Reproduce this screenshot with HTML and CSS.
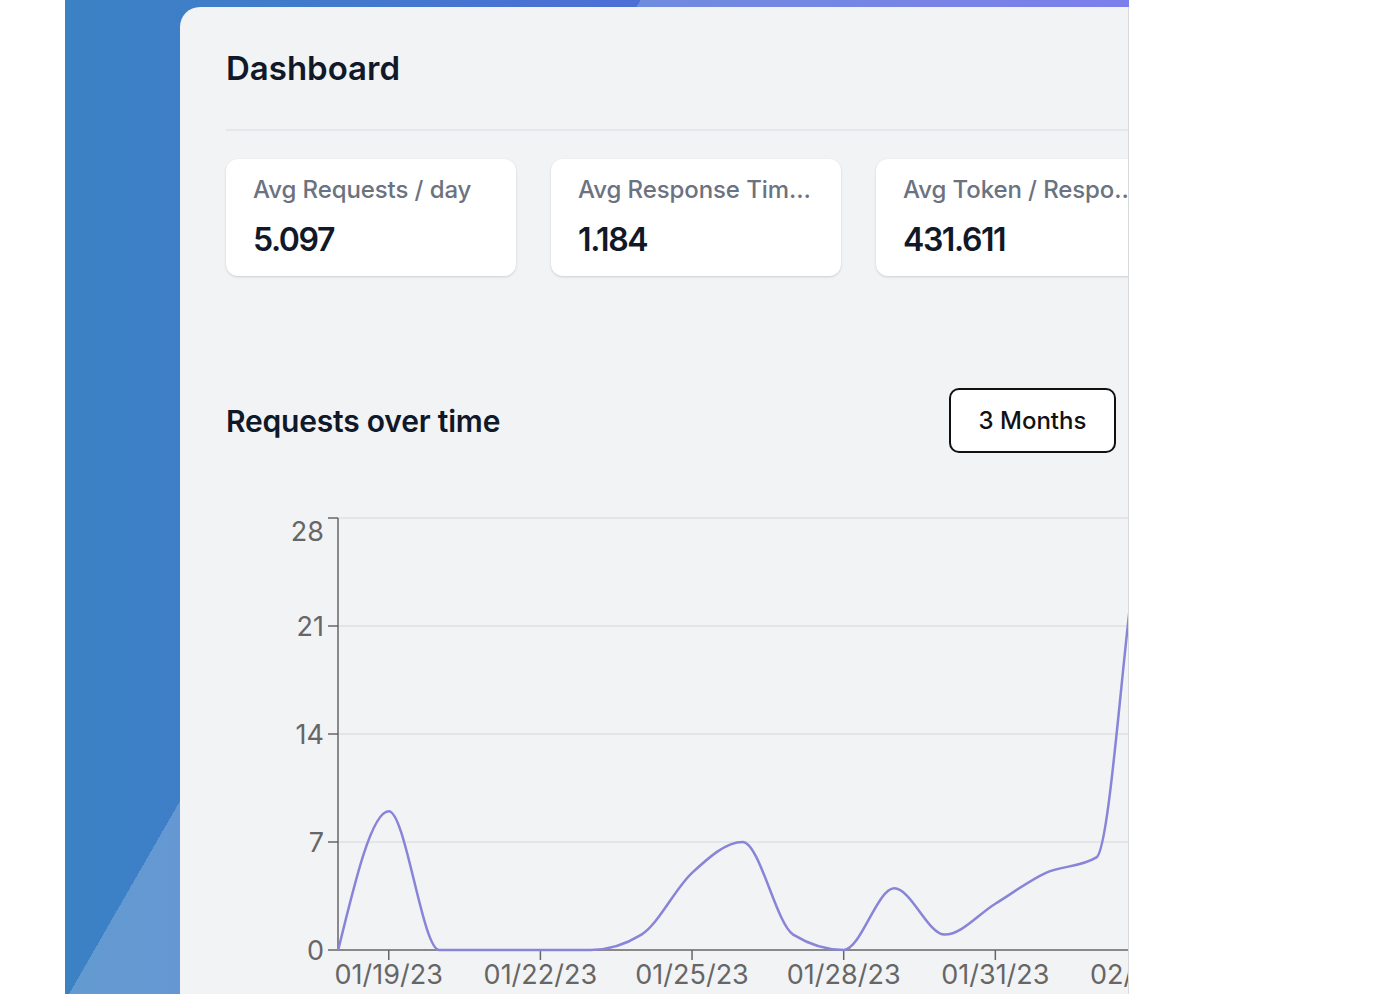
FILE: index.html
```html
<!DOCTYPE html>
<html lang="en">
<head>
<meta charset="utf-8">
<title>Dashboard</title>
<link rel="stylesheet" href="styles.css">
</head>
<body>
<div class="frame">
  <main class="panel">
    <div class="content">
      <h1 class="title">Dashboard</h1>
      <div class="divider"></div>
      <div class="stats">
        <div class="stat">
          <div class="stat-label">Avg Requests / day</div>
          <div class="stat-value">5.097</div>
        </div>
        <div class="stat">
          <div class="stat-label">Avg Response Time (s)</div>
          <div class="stat-value">1.184</div>
        </div>
        <div class="stat">
          <div class="stat-label">Avg Token / Response</div>
          <div class="stat-value">431.611</div>
        </div>
      </div>
      <div class="section-head">
        <h2 class="section-title">Requests over time</h2>
        <button class="range-btn">3 Months</button>
      </div>
      <div class="chart">
        <svg class="chart-svg" width="903" height="494" viewBox="0 0 903 494">
          <g class="grid">
            <line x1="112" y1="18" x2="903" y2="18"/>
            <line x1="112" y1="126" x2="903" y2="126"/>
            <line x1="112" y1="234" x2="903" y2="234"/>
            <line x1="112" y1="342" x2="903" y2="342"/>
          </g>
          <g class="axis">
            <line x1="112" y1="18" x2="112" y2="450"/>
            <line x1="112" y1="450" x2="903" y2="450"/>
            <line x1="102" y1="18" x2="112" y2="18"/>
            <line x1="102" y1="126" x2="112" y2="126"/>
            <line x1="102" y1="234" x2="112" y2="234"/>
            <line x1="102" y1="342" x2="112" y2="342"/>
            <line x1="102" y1="450" x2="112" y2="450"/>
            <line x1="162.75" y1="450" x2="162.75" y2="460"/>
            <line x1="314.4" y1="450" x2="314.4" y2="460"/>
            <line x1="466.05" y1="450" x2="466.05" y2="460"/>
            <line x1="617.7" y1="450" x2="617.7" y2="460"/>
            <line x1="769.35" y1="450" x2="769.35" y2="460"/>
          </g>
          <g class="ylabels">
            <text x="98" y="41">28</text>
            <text x="98" y="136">21</text>
            <text x="98" y="244">14</text>
            <text x="98" y="352">7</text>
            <text x="98" y="460">0</text>
          </g>
          <g class="xlabels">
            <text x="162.75" y="484">01/19/23</text>
            <text x="314.4" y="484">01/22/23</text>
            <text x="466.05" y="484">01/25/23</text>
            <text x="617.7" y="484">01/28/23</text>
            <text x="769.35" y="484">01/31/23</text>
            <text class="xlabel-start" x="864" y="484">02/</text>
          </g>
          <path id="series" class="series" d=""/>
        </svg>
      </div>
    </div>
  </main>
</div>
<script src="script.js"></script>
</body>
</html>
```

FILE: styles.css
```css
* { box-sizing: border-box; }

body {
  margin: 0;
  background: #ffffff;
  font-family: Inter, "Noto Sans", sans-serif;
}

.frame {
  margin-left: 65px;
  width: 1064px;
  height: 994px;
  overflow: hidden;
  padding: 7px 0 0 115px;
  background:
    linear-gradient(119.9deg, rgba(255,255,255,0) 499px, rgba(255,255,255,0.2) 499px),
    linear-gradient(to right, #3b82c4, #5b5fe6);
}

.panel {
  width: 949px;
  height: 987px;
  background: #f2f3f5;
  border-top-left-radius: 20px;
  border-right: 1px solid #d8d9db;
  overflow: hidden;
}

.content {
  padding-left: 46px;
}

.title {
  margin: 41px 0 0;
  font-size: 33px;
  line-height: 40px;
  font-weight: 600;
  color: #111827;
  letter-spacing: 0;
}

.divider {
  height: 2px;
  background: #e5e6e9;
  margin-top: 41px;
}

.stats {
  display: flex;
  gap: 35px;
  margin-top: 28px;
}

.stat {
  flex: 0 0 290px;
  width: 290px;
  min-width: 0;
  height: 117px;
  background: #ffffff;
  border-radius: 12px;
  box-shadow: 0 1px 3px rgba(0,0,0,0.1), 0 1px 2px rgba(0,0,0,0.06);
  padding: 16px 21px 0 27px;
}

.stat-label {
  font-size: 24px;
  line-height: 30px;
  font-weight: 500;
  color: #6b7280;
  letter-spacing: -0.1px;
  white-space: nowrap;
  overflow: hidden;
  text-overflow: ellipsis;
}

.stat-value {
  margin-top: 15px;
  font-size: 32px;
  line-height: 40px;
  font-weight: 600;
  color: #111827;
  letter-spacing: -1.4px;
}

.section-head {
  display: flex;
  justify-content: space-between;
  align-items: center;
  width: 890px;
  margin-top: 112px;
}

.section-title {
  margin: 0;
  font-size: 30px;
  line-height: 36px;
  font-weight: 600;
  color: #111827;
  letter-spacing: -0.2px;
}

.range-btn {
  width: 167px;
  height: 65px;
  border: 2px solid #111111;
  border-radius: 10px;
  background: #ffffff;
  font-family: Inter, "Noto Sans", sans-serif;
  font-size: 24px;
  font-weight: 500;
  color: #111111;
  padding: 0;
}

.chart {
  margin-top: 47px;
}

.chart-svg {
  display: block;
  overflow: visible;
}

.grid line {
  stroke: #e0e1e3;
  stroke-width: 1.5;
}

.axis line {
  stroke: #666666;
  stroke-width: 1.5;
}

.ylabels text,
.xlabels text {
  font-family: Inter, "Noto Sans", sans-serif;
  font-size: 27px;
  fill: #666666;
}

.ylabels text { text-anchor: end; }
.xlabels text { text-anchor: middle; }
.xlabels .xlabel-start { text-anchor: start; }

.series {
  fill: none;
  stroke: #8884d8;
  stroke-width: 2.5;
}
```

FILE: script.js
```js
(function () {
  var vals = [0, 9, 0, 0, 0, 0, 1, 5, 7, 1, 0, 4, 1, 3, 5, 6, 28, 12, 8];
  var x0 = 112.2, dx = 50.55, yb = 450, ky = 108 / 7;
  var p = vals.map(function (v, i) { return [x0 + dx * i, yb - v * ky]; });
  var n = p.length, s = [], m = [];
  function sign(x) { return x < 0 ? -1 : 1; }
  for (var i = 0; i < n - 1; i++) s.push((p[i + 1][1] - p[i][1]) / (p[i + 1][0] - p[i][0]));
  for (i = 1; i < n - 1; i++) {
    var h0 = p[i][0] - p[i - 1][0], h1 = p[i + 1][0] - p[i][0];
    var s0 = s[i - 1], s1 = s[i];
    var pp = (s0 * h1 + s1 * h0) / (h0 + h1);
    m[i] = (sign(s0) + sign(s1)) * Math.min(Math.abs(s0), Math.abs(s1), 0.5 * Math.abs(pp)) || 0;
  }
  m[0] = (3 * s[0] - m[1]) / 2;
  m[n - 1] = (3 * s[n - 2] - m[n - 2]) / 2;
  var d = 'M' + p[0][0] + ',' + p[0][1];
  for (i = 0; i < n - 1; i++) {
    var h = (p[i + 1][0] - p[i][0]) / 3;
    d += 'C' + (p[i][0] + h) + ',' + (p[i][1] + h * m[i]) + ',' +
         (p[i + 1][0] - h) + ',' + (p[i + 1][1] - h * m[i + 1]) + ',' +
         p[i + 1][0] + ',' + p[i + 1][1];
  }
  document.getElementById('series').setAttribute('d', d);
})();
```
